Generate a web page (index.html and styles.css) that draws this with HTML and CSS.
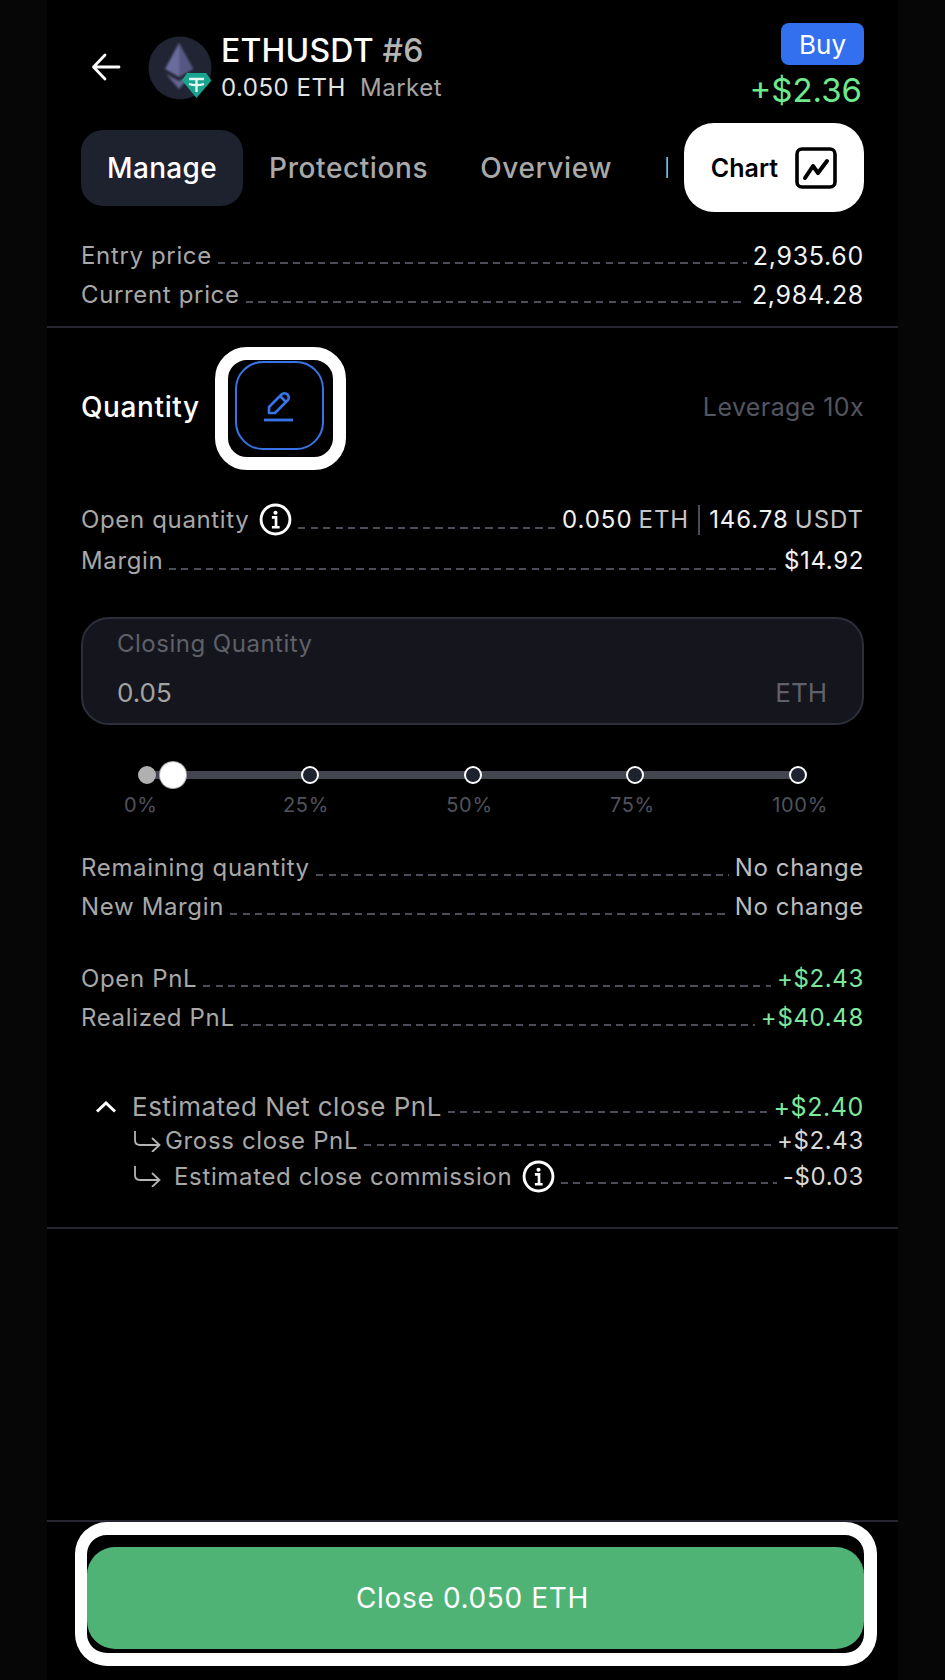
FILE: index.html
```html
<!DOCTYPE html>
<html lang="en">
<head>
<meta charset="utf-8">
<title>ETHUSDT #6</title>
<link rel="stylesheet" href="styles.css">
</head>
<body>
<div class="phone">
  <div class="pad">
    <header class="header">
      <svg class="back" viewBox="0 0 30 30" width="30" height="30"><path d="M28 15H2.500M14 3 2.500 15 14 27" fill="none" stroke="#fff" stroke-width="2.800" stroke-linecap="round" stroke-linejoin="round"/></svg>
      <svg class="avatar" viewBox="0 0 64 64" width="64" height="64">
        <defs><filter id="soft" x="-20%" y="-20%" width="140%" height="140%"><feGaussianBlur stdDeviation="1.300"/></filter></defs>
        <circle cx="32" cy="32" r="31.500" fill="#212433"/>
        <g filter="url(#soft)">
          <path d="M31 7 17 33l14 8 14-8z" fill="#6a6c9c"/>
          <path d="M31 7v34l14-8z" fill="#575983"/>
          <path d="M18 38l13 15 13-15-13 7z" fill="#64668f"/>
        </g>
        <path d="M39 37h19l5.500 7.500L48.500 62 34 44.500z" fill="#18a48e"/>
        <path d="M41 43h15M48.500 43v13M41 48c4 1.500 11 1.500 15 0" fill="none" stroke="#e4f7f2" stroke-width="2.400"/>
      </svg>
      <div class="titles">
        <div class="title">ETHUSDT <span class="muted">#6</span></div>
        <div class="sub">0.050 ETH <span class="market">Market</span></div>
      </div>
      <div class="hright">
        <span class="badge">Buy</span>
        <span class="pnl">+$2.36</span>
      </div>
    </header>

    <nav class="tabsrow">
      <div class="tabs">
        <span class="tab active">Manage</span>
        <span class="tab">Protections</span>
        <span class="tab">Overview</span>
        <span class="tab">History</span>
      </div>
      <div class="chart">
        <span>Chart</span>
        <svg viewBox="0 0 42 42" width="42" height="42"><rect x="2" y="2" width="38" height="38" rx="5" fill="none" stroke="#000" stroke-width="3.600"/><path d="M10 31 18 19l5 7 9-12" fill="none" stroke="#000" stroke-width="4" stroke-linecap="round" stroke-linejoin="round"/></svg>
      </div>
    </nav>

    <section class="rows first">
      <div class="row"><span class="lab">Entry price</span><i class="dash"></i><span class="val price">2,935.60</span></div>
      <div class="row"><span class="lab">Current price</span><i class="dash"></i><span class="val price">2,984.28</span></div>
    </section>
  </div>

  <hr class="rule">

  <div class="pad">
    <div class="qty">
      <span class="qtytitle">Quantity</span>
      <div class="editring">
        <div class="editbtn">
          <svg viewBox="0 0 32 32" width="32" height="32"><path d="M6 23V17L18.500 4.500a4.200 4.200 0 0 1 6 6L12 23zM17 6l6 6" fill="none" stroke="#3874e8" stroke-width="2.600" stroke-linejoin="round"/><path d="M1 30h29" stroke="#3874e8" stroke-width="2.800"/></svg>
        </div>
      </div>
      <span class="lev">Leverage 10x</span>
    </div>

    <section class="rows open">
      <div class="row wide">
        <span class="lab">Open quantity</span>
        <svg class="info" viewBox="0 0 32 32" width="33" height="33"><circle cx="16" cy="16" r="14" fill="none" stroke="#fff" stroke-width="2.800"/><circle cx="16" cy="9.500" r="2" fill="#fff"/><path d="M12.500 14H16.500V23M12.500 23.500H20" fill="none" stroke="#fff" stroke-width="2.600"/></svg>
        <i class="dash"></i>
        <span class="val qtyval">0.050 <span class="unit">ETH</span><b class="sep"></b>146.78 <span class="unit">USDT</span></span>
      </div>
      <div class="row wide"><span class="lab">Margin</span><i class="dash"></i><span class="val">$14.92</span></div>
    </section>

    <div class="field">
      <div class="fieldlabel">Closing Quantity</div>
      <div class="fieldline"><span>0.05</span><span class="fieldunit">ETH</span></div>
    </div>

    <div class="slider">
      <div class="track"></div>
      <span class="dot zero"></span>
      <span class="dot"></span>
      <span class="dot"></span>
      <span class="dot"></span>
      <span class="dot"></span>
      <span class="thumb"></span>
    </div>
    <div class="marks"><span>0%</span><span>25%</span><span>50%</span><span>75%</span><span>100%</span></div>

    <section class="rows remaining">
      <div class="row"><span class="lab">Remaining quantity</span><i class="dash"></i><span class="val soft">No change</span></div>
      <div class="row"><span class="lab">New Margin</span><i class="dash"></i><span class="val soft">No change</span></div>
    </section>

    <section class="rows pnlrows">
      <div class="row"><span class="lab">Open PnL</span><i class="dash"></i><span class="val green">+$2.43</span></div>
      <div class="row"><span class="lab">Realized PnL</span><i class="dash"></i><span class="val green">+$40.48</span></div>
    </section>

    <section class="rows est">
      <div class="row r1">
        <svg class="chev" viewBox="0 0 22 12" width="22" height="12"><path d="M2 10.500 11 2l9 8.500" fill="none" stroke="#fff" stroke-width="3"/></svg>
        <span class="lab">Estimated Net close PnL</span><i class="dash"></i><span class="val green">+$2.40</span>
      </div>
      <div class="row r2">
        <svg class="sub-arrow" viewBox="0 0 28 22" width="28" height="22"><path d="M2 1v9c0 3 1.500 5 5 5h19M19 8l7.500 7L19 22" fill="none" stroke="#b5b5b5" stroke-width="1.800"/></svg>
        <span class="lab">Gross close PnL</span><i class="dash"></i><span class="val dim">+$2.43</span>
      </div>
      <div class="row r3">
        <svg class="sub-arrow gap" viewBox="0 0 28 22" width="28" height="22"><path d="M2 1v9c0 3 1.500 5 5 5h19M19 8l7.500 7L19 22" fill="none" stroke="#b5b5b5" stroke-width="1.800"/></svg>
        <span class="lab">Estimated close commission</span>
        <svg class="info" viewBox="0 0 32 32" width="33" height="33"><circle cx="16" cy="16" r="14" fill="none" stroke="#fff" stroke-width="2.800"/><circle cx="16" cy="9.500" r="2" fill="#fff"/><path d="M12.500 14H16.500V23M12.500 23.500H20" fill="none" stroke="#fff" stroke-width="2.600"/></svg>
        <i class="dash"></i><span class="val dim">-$0.03</span>
      </div>
    </section>
  </div>

  <hr class="rule after-est">
  <div class="spacer"></div>
  <hr class="rule">

  <footer class="footer">
    <div class="closering">
      <button class="close">Close 0.050 ETH</button>
    </div>
  </footer>
</div>
</body>
</html>
```

FILE: styles.css
```css
* { box-sizing: border-box; }
html, body { margin: 0; padding: 0; }
body {
  background: #060606;
  font-family: Inter, "Liberation Sans", sans-serif;
  color: #fff;
}
.phone {
  width: 851px;
  height: 1680px;
  margin-left: 47px;
  background: #000;
  display: flex;
  flex-direction: column;
}
.pad { padding: 0 34px; }
.rule {
  height: 2px;
  margin: 0;
  border: 0;
  background: #252632;
  flex: none;
}
.after-est { margin-top: 32px; }
.spacer { flex: 1; }

.header {
  height: 89px;
  margin-top: 23px;
  display: flex;
  align-items: center;
}
.back { margin-left: 10px; margin-top: -2px; flex: none; }
.avatar { margin-left: 27px; flex: none; }
.titles { margin-left: 9px; padding-top: 3px; flex: 1; }
.title { font-size: 32px; font-weight: 500; line-height: 37px; letter-spacing: .2px; white-space: nowrap; }
.muted { color: #b4b4b4; }
.sub { font-size: 24px; line-height: 37px; color: #e4e4e4; white-space: nowrap; letter-spacing: .5px; }
.market { color: #a5a5a5; margin-left: 7px; }
.hright { display: flex; flex-direction: column; align-items: flex-end; align-self: flex-start; }
.badge {
  width: 83px;
  height: 42px;
  border-radius: 8px;
  background: #3370f0;
  font-size: 26px;
  line-height: 43px;
  text-align: center;
}
.pnl {
  margin: 5px 2px 0 0;
  font-size: 33px;
  line-height: 40px;
  color: #6ee98c;
}

.tabsrow {
  margin-top: 11px;
  display: flex;
  align-items: center;
  gap: 16px;
  height: 89px;
}
.tabs { width: 587px; flex: none; overflow: hidden; display: flex; }
.tab {
  flex: none;
  padding: 0 26px;
  height: 76px;
  line-height: 76px;
  font-size: 28px;
  font-weight: 500;
  letter-spacing: .6px;
  color: #a9a9a9;
}
.tab.active { background: #1e212e; color: #fff; border-radius: 22px; letter-spacing: .35px; }
.chart {
  width: 180px;
  height: 89px;
  background: #fff;
  border-radius: 30px;
  color: #000;
  display: flex;
  align-items: center;
  justify-content: center;
  gap: 17px;
  font-size: 25px;
  font-weight: 600;
}

.rows { display: flex; flex-direction: column; }
.first { margin-top: 24px; padding-bottom: 12px; }
.row {
  height: 39px;
  display: flex;
  align-items: center;
  font-size: 24px;
  letter-spacing: .65px;
  white-space: nowrap;
}
.row.wide { height: 41px; }
.lab { color: #a8a8a8; flex: none; }
.val { color: #f2f2f2; flex: none; display: flex; align-items: center; gap: 6px; }
.val.price { font-size: 25px; letter-spacing: .7px; }
.val.qtyval { letter-spacing: .95px; }
.val.soft { color: #bdbdbd; }
.val.dim { color: #d8d8d8; }
.val.green { color: #7de89b; }
.unit { color: #c4c4c4; }
.sep { width: 2px; height: 30px; background: #4a4c58; margin: 0 3px; }
.dash {
  flex: 1;
  height: 2px;
  align-self: flex-end;
  margin: 0 6px 11px 6px;
  background: repeating-linear-gradient(90deg, #4b4d59 0 7px, transparent 7px 12.500px);
}

.qty { height: 123px; margin-top: 19px; display: flex; align-items: center; }
.qtytitle { font-size: 28px; font-weight: 500; letter-spacing: .6px; margin-top: -4px; }
.editring {
  margin-left: 15px;
  width: 131px;
  height: 123px;
  border: 13px solid #fff;
  border-radius: 32px;
  background: #000;
  display: flex;
  justify-content: flex-start;
  padding: 1px 0 0 7px;
}
.editbtn {
  width: 89px;
  height: 89px;
  border: 2px solid #3874e8;
  border-radius: 28px;
  display: flex;
  align-items: center;
  justify-content: center;
}
.lev { margin: -4px 0 0 auto; font-size: 25px; color: #53555f; letter-spacing: .4px; }

.open { margin-top: 29px; }
.info { flex: none; margin-left: 10px; }

.field {
  margin-top: 36px;
  height: 108px;
  background: #15161d;
  border: 2px solid #2c2e3a;
  border-radius: 28px;
  padding: 9px 35px 0 34px;
}
.fieldlabel { font-size: 24px; line-height: 32px; color: #5f6069; letter-spacing: .5px; }
.fieldline {
  margin-top: 16px;
  display: flex;
  justify-content: space-between;
  font-size: 26px;
  line-height: 34px;
  color: #a3a3a3;
}
.fieldunit { color: #5f6069; }

.slider {
  position: relative;
  height: 28px;
  margin: 36px 57px 0 57px;
  display: flex;
  align-items: center;
  justify-content: space-between;
}
.track {
  position: absolute;
  left: 8px;
  right: 8px;
  top: 10px;
  height: 8px;
  background: #43454f;
}
.dot {
  position: relative;
  width: 18px;
  height: 18px;
  border-radius: 50%;
  background: #1e212e;
  border: 2.500px solid #fff;
}
.dot.zero { background: #b0b0b0; border-color: #b0b0b0; }
.thumb {
  position: absolute;
  left: 22px;
  top: 1px;
  width: 26px;
  height: 26px;
  border-radius: 50%;
  background: #fff;
  box-shadow: 0 0 0 1px #aaa;
}
.marks {
  margin: 4px 36px 0 43px;
  display: flex;
  justify-content: space-between;
  font-size: 20px;
  line-height: 24px;
  color: #50525c;
  letter-spacing: .7px;
}
.marks span:first-child { margin-right: 8px; }

.remaining { margin-top: 31px; }
.pnlrows { margin-top: 33px; }
.est { margin-top: 52px; }
.est .row.r1 { height: 35px; font-size: 26px; letter-spacing: .5px; }
.est .row.r1 .val { font-size: 25px; letter-spacing: .6px; }
.est .row.r2 { height: 33px; }
.est .row.r3 { height: 38px; }
.chev { margin-left: 14px; margin-right: 15px; flex: none; }
.sub-arrow { margin-left: 52px; margin-right: 4px; flex: none; }
.sub-arrow.gap { margin-right: 13px; }

.footer { padding: 0 21px 14px 28px; }
.closering {
  height: 144px;
  border: 13px solid #fff;
  border-left-width: 12px;
  border-radius: 32px;
  background: #000;
  padding: 12px 0 4px;
}
.close {
  display: block;
  width: 100%;
  height: 102px;
  border: 0;
  border-radius: 28px;
  padding: 0 6px 0 0;
  background: #50b376;
  color: #fff;
  font-family: inherit;
  font-size: 28px;
  letter-spacing: .65px;
}
```
